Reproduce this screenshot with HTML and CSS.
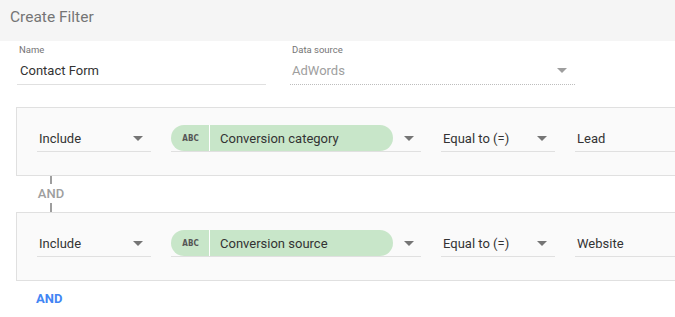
FILE: index.html
```html
<!DOCTYPE html>
<html lang="en">
<head>
    <meta charset="UTF-8">
    <title>Create Filter</title>
    <link rel="stylesheet" href="styles.css">
</head>
<body>

<div class="dialog">
    <div class="dialog-title">Create Filter</div>

    <div class="meta">
        <div class="meta-field name-field">
            <div class="meta-label">Name</div>
            <div class="meta-value">Contact Form</div>
        </div>
        <div class="meta-field source-field">
            <div class="meta-label">Data source</div>
            <div class="meta-value disabled">
                <span>AdWords</span>
                <span class="arrow"></span>
            </div>
        </div>
    </div>

    <div class="clause">
        <div class="select include">
            <span>Include</span>
            <span class="arrow"></span>
        </div>
        <div class="select field">
            <div class="chip">
                <span class="chip-type">ABC</span>
                <span class="chip-name">Conversion category</span>
            </div>
            <span class="arrow"></span>
        </div>
        <div class="select operator">
            <span>Equal to (=)</span>
            <span class="arrow"></span>
        </div>
        <div class="select value">
            <span>Lead</span>
        </div>
    </div>

    <div class="connector">
        <span class="connector-line"></span>
        <span class="connector-text">AND</span>
        <span class="connector-line"></span>
    </div>

    <div class="clause">
        <div class="select include">
            <span>Include</span>
            <span class="arrow"></span>
        </div>
        <div class="select field">
            <div class="chip">
                <span class="chip-type">ABC</span>
                <span class="chip-name">Conversion source</span>
            </div>
            <span class="arrow"></span>
        </div>
        <div class="select operator">
            <span>Equal to (=)</span>
            <span class="arrow"></span>
        </div>
        <div class="select value">
            <span>Website</span>
        </div>
    </div>

    <button class="add-and">AND</button>
</div>

</body>
</html>
```

FILE: styles.css
```css
body {
    font-family: Roboto, 'Liberation Sans', sans-serif;
    margin: 0;
    padding: 0;
    background: #fff;
    color: #333;
    overflow: hidden;
}

.dialog {
    width: 675px;
    height: 317px;
    overflow: hidden;
}

.dialog-title {
    height: 41px;
    line-height: 35px;
    padding-left: 10px;
    background: #f5f5f5;
    font-size: 15.5px;
    color: #757575;
}

.meta {
    display: flex;
    gap: 24px;
    padding: 3px 0 0 17px;
}

.name-field {
    width: 249px;
}

.source-field {
    width: 285px;
}

.meta-label {
    font-size: 9.5px;
    line-height: 12px;
    color: #757575;
    padding-left: 2px;
}

.meta-value {
    display: flex;
    align-items: center;
    justify-content: space-between;
    height: 28px;
    padding: 0 8px 0 3px;
    font-size: 13px;
    color: #333;
    border-bottom: 1px solid #e0e0e0;
}

.meta-value.disabled {
    color: #9e9e9e;
    padding-left: 2px;
    border-bottom: 1px dotted #bdbdbd;
}

.arrow {
    width: 0;
    height: 0;
    border-left: 5px solid transparent;
    border-right: 5px solid transparent;
    border-top: 5px solid #757575;
}

.meta-value .arrow {
    border-top-color: #9e9e9e;
}

.clause {
    display: flex;
    gap: 20px;
    margin: 22px 0 0 16px;
    width: 760px;
    padding: 17px 0 23px 20px;
    background: #fafafa;
    border: 1px solid #e0e0e0;
}

.select {
    flex: none;
    display: flex;
    align-items: center;
    justify-content: space-between;
    height: 26px;
    padding: 0 8px 0 2px;
    font-size: 13px;
    color: #333;
    border-bottom: 1px solid #e0e0e0;
}

.include,
.operator {
    width: 104px;
}

.field {
    width: 243px;
    padding-left: 0;
    padding-right: 7px;
}

.value {
    width: 160px;
}

.chip {
    display: flex;
    align-items: center;
    width: 222px;
    height: 26px;
    background: #c8e6c9;
    border-radius: 13px;
    overflow: hidden;
}

.chip-type {
    width: 38px;
    height: 100%;
    line-height: 27px;
    text-align: center;
    font-family: 'DejaVu Sans Condensed', 'DejaVu Sans', sans-serif;
    font-size: 8px;
    font-weight: bold;
    color: #555;
    border-right: 1px solid #fff;
    padding-left: 1px;
    box-sizing: border-box;
    width: 39px;
}

.chip-name {
    padding-left: 10px;
    font-size: 13px;
    color: #333;
}

.connector {
    display: flex;
    flex-direction: column;
    align-items: center;
    width: 30px;
    margin-left: 36px;
}

.connector-line {
    width: 2px;
    height: 8px;
    background: #9e9e9e;
}

.connector-line:last-child {
    height: 9px;
}

.connector-text {
    font-size: 13px;
    font-weight: 500;
    line-height: 19px;
    color: #9e9e9e;
}

.connector + .clause {
    margin-top: 0;
}

.add-and {
    display: block;
    margin: 8px 0 0 36px;
    padding: 0;
    border: none;
    background: none;
    font-family: Roboto, 'Liberation Sans', sans-serif;
    font-size: 13px;
    font-weight: bold;
    color: #4285f4;
    line-height: 19px;
    cursor: pointer;
}
```
